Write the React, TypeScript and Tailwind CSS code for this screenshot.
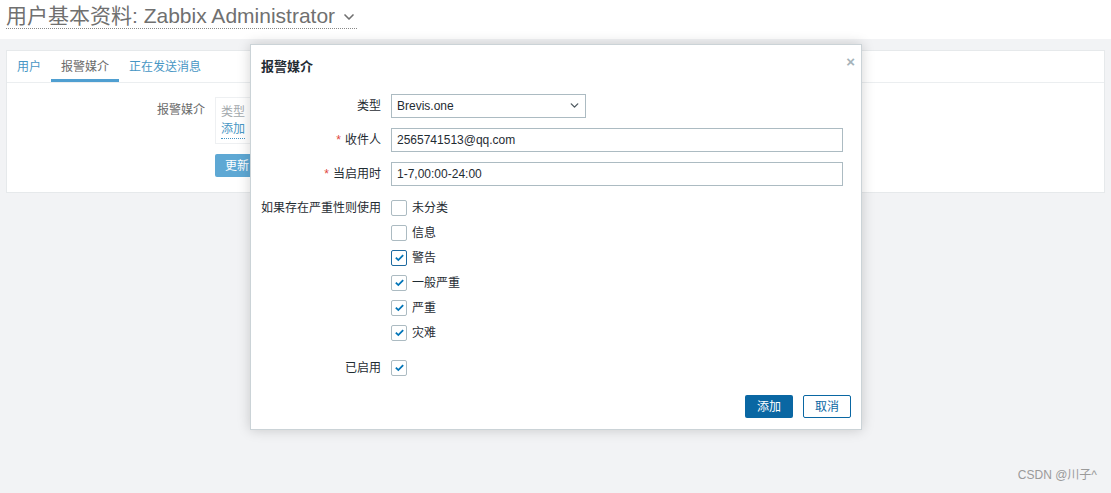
import { ChevronDown } from "lucide-react";

const font = { fontFamily: '"Liberation Sans", "Noto Sans CJK SC", sans-serif' };

const severities = [
  { label: "未分类", checked: false },
  { label: "信息", checked: false },
  { label: "警告", checked: true, focus: true },
  { label: "一般严重", checked: true },
  { label: "严重", checked: true },
  { label: "灾难", checked: true },
];

function Check({ checked, focus }: { checked: boolean; focus?: boolean }) {
  return (
    <span
      className={`flex h-[16px] w-[16px] shrink-0 items-center justify-center rounded-[2px] border bg-white ${
        focus ? "border-[#1e6aa0]" : "border-[#acbbc2]"
      }`}
    >
      {checked && (
        <svg viewBox="0 0 12 12" className="h-[11px] w-[11px]">
          <path d="M2 6.2l2.7 2.6L10 3.4" fill="none" stroke="#0275b8" strokeWidth="2" />
        </svg>
      )}
    </span>
  );
}

export default function App() {
  return (
    <div className="relative min-h-[493px] bg-[#f2f3f5] text-[12px] text-[#1f2c33]" style={font}>
      <header className="flex h-[39px] items-start bg-white px-[6px] pt-[4px]">
        <h1 className="flex items-center border-b border-dotted border-[#888] text-[21px] leading-[24px] text-[#707070]">
          用户基本资料: Zabbix Administrator
          <ChevronDown className="ml-[6px] mt-[2px] h-[16px] w-[16px]" strokeWidth={2.5} />
        </h1>
      </header>

      <div className="mx-[6px] mt-[11px] border border-[#e6e9eb] bg-white">
        <div className="flex border-b border-[#ebeef0]">
          <span className="px-[10px] pb-[6px] pt-[7px] text-[#4796c4]">用户</span>
          <span className="border-b-[3px] border-[#4f9fd1] px-[10px] pb-[3px] pt-[7px] text-[#6b6b6b]">报警媒介</span>
          <span className="px-[10px] pb-[6px] pt-[7px] text-[#4796c4]">正在发送消息</span>
        </div>
        <div className="flex gap-[10px] pb-[15px] pt-[14px]">
          <div className="w-[198px] pt-[4px] text-right text-[#6b6b6b]">报警媒介</div>
          <div className="flex flex-col gap-[10px]">
            <div className="flex h-[47px] w-[60px] flex-col border border-[#eef0f2] px-[5px] pt-[6px] leading-[17px]">
              <span className="text-[#a3a9ad]">类型</span>
              <span className="w-fit border-b border-dotted border-[#4796c4] text-[#4796c4]">添加</span>
            </div>
            <button className="h-[23px] w-[60px] rounded-[2px] bg-[#5ea8d4] pl-[10px] text-left text-white">更新</button>
          </div>
        </div>
      </div>

      <div className="absolute left-[250px] top-[44px] flex h-[386px] w-[612px] flex-col border border-[#cbd3d7] bg-white shadow-[0_0_12px_rgba(0,0,0,0.18)]">
        <div className="flex items-start justify-between pl-[10px] pr-[6px] pt-[12px]">
          <h2 className="text-[13px] font-bold text-[#1f2c33]">报警媒介</h2>
          <span className="-mt-[6px] text-[15px] font-bold text-[#a5b3ba]">×</span>
        </div>

        <div className="mt-[17px] flex flex-col pl-[10px] pr-[18px]">
          <div className="flex items-center gap-[10px]">
            <div className="w-[120px] text-right">类型</div>
            <div className="flex h-[24px] w-[195px] items-center justify-between border border-[#acbbc2] pl-[5px] pr-[4px]">
              <span>Brevis.one</span>
              <ChevronDown className="h-[13px] w-[13px] text-[#4f5a60]" strokeWidth={2.5} />
            </div>
          </div>
          <div className="mt-[10px] flex items-center gap-[10px]">
            <div className="w-[120px] text-right">
              <span className="mr-[4px] text-[#e0463d]">*</span>收件人
            </div>
            <div className="flex h-[24px] flex-1 items-center border border-[#acbbc2] pl-[5px]">2565741513@qq.com</div>
          </div>
          <div className="mt-[10px] flex items-center gap-[10px]">
            <div className="w-[120px] text-right">
              <span className="mr-[4px] text-[#e0463d]">*</span>当启用时
            </div>
            <div className="flex h-[24px] flex-1 items-center border border-[#acbbc2] pl-[5px]">1-7,00:00-24:00</div>
          </div>

          <div className="mt-[14px] flex gap-[10px]">
            <div className="flex h-[16px] w-[120px] items-center justify-end whitespace-nowrap">如果存在严重性则使用</div>
            <div className="flex flex-col gap-[9px]">
              {severities.map((s) => (
                <div key={s.label} className="flex h-[16px] items-center gap-[5px]">
                  <Check checked={s.checked} focus={s.focus} />
                  <span>{s.label}</span>
                </div>
              ))}
            </div>
          </div>

          <div className="mt-[19px] flex h-[16px] items-center gap-[10px]">
            <div className="w-[120px] text-right">已启用</div>
            <Check checked />
          </div>
        </div>

        <div className="mt-auto flex justify-end gap-[10px] pb-[11px] pr-[10px]">
          <button className="h-[23px] w-[48px] rounded-[2px] bg-[#0a67a3] text-white">添加</button>
          <button className="h-[23px] w-[48px] rounded-[2px] border border-[#0a67a3] bg-white text-[#0a67a3]">取消</button>
        </div>
      </div>

      <div className="absolute bottom-[9px] right-[14px] text-[12px] text-[#9a9a9a]">CSDN @川子^</div>
    </div>
  );
}
